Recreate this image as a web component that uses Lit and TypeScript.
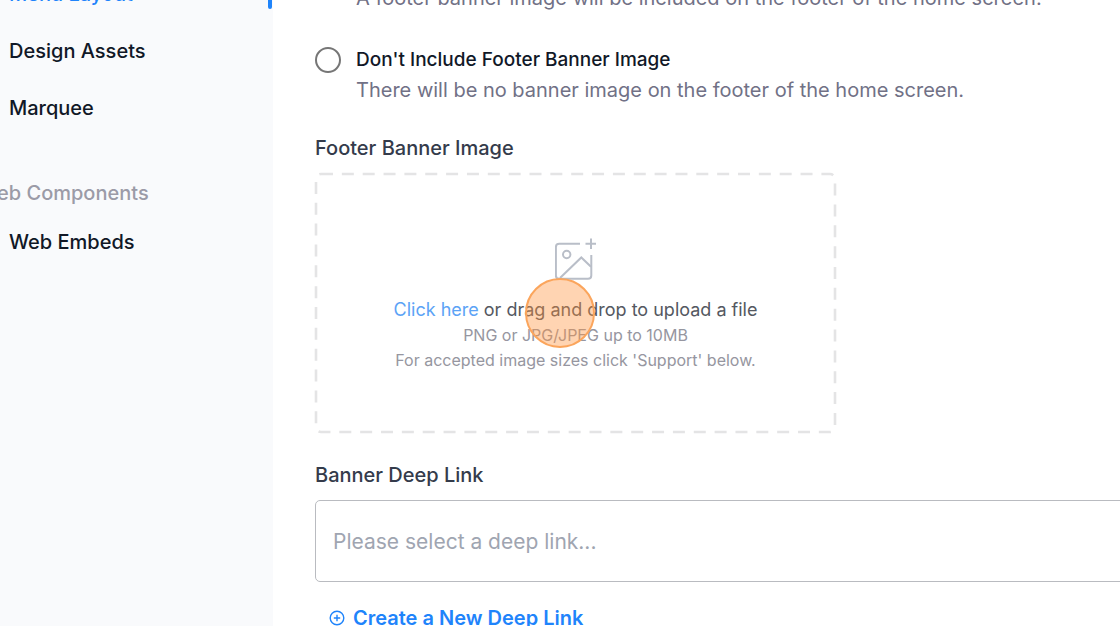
import { LitElement, html, css, svg } from "lit";
import { customElement, property } from "lit/decorators.js";
import { classMap } from "lit/directives/class-map.js";

interface NavItem {
  label: string;
  active?: boolean;
}

const LAYOUT_ITEMS: NavItem[] = [
  { label: "Menu Layout", active: true },
  { label: "Design Assets" },
  { label: "Marquee" },
];

const WEB_ITEMS: NavItem[] = [{ label: "Web Embeds" }];

@customElement("side-nav")
class SideNav extends LitElement {
  static styles = css`
    :host {
      display: block;
      background: #f9fafc;
      color: #111827;
      font-size: 20px;
      font-weight: 500;
      line-height: 32px;
    }
    .list {
      list-style: none;
      margin: 0;
      padding: 0;
      display: grid;
      gap: 25px;
    }
    .link {
      display: flex;
      justify-content: space-between;
      padding-left: 31px;
      margin-right: 1px;
      color: inherit;
      text-decoration: none;
    }
    .link.active {
      color: #1f84fb;
    }
    .marker {
      width: 4px;
      margin-bottom: 1px;
      border-radius: 2px;
      background: #1f84fb;
    }
    .heading {
      margin: 53px 0 17px;
      color: #9b9ba7;
      font-size: inherit;
      font-weight: 500;
    }
  `;

  private renderItem(item: NavItem) {
    return html`<li>
      <a href="#" class=${classMap({ link: true, active: !!item.active })}>
        <span>${item.label}</span>
        ${item.active ? html`<span class="marker"></span>` : null}
      </a>
    </li>`;
  }

  render() {
    return html`
      <nav>
        <ul class="list">
          ${LAYOUT_ITEMS.map((i) => this.renderItem(i))}
        </ul>
        <h2 class="heading">Web Components</h2>
        <ul class="list">
          ${WEB_ITEMS.map((i) => this.renderItem(i))}
        </ul>
      </nav>
    `;
  }
}

@customElement("banner-option")
class BannerOption extends LitElement {
  @property() label = "";
  @property() description = "";
  @property({ type: Boolean }) checked = false;

  static styles = css`
    :host {
      display: block;
    }
    .option {
      display: grid;
      grid-template-columns: 26px 1fr;
      column-gap: 15px;
      align-items: center;
    }
    .radio {
      appearance: none;
      box-sizing: border-box;
      width: 26px;
      height: 26px;
      margin: 0;
      border: 2px solid #767676;
      border-radius: 50%;
      background: #fff;
    }
    .radio:checked {
      border: 8px solid #1f84fb;
    }
    .label {
      color: #111827;
      font-size: 19px;
      font-weight: 500;
      line-height: 30px;
    }
    .description {
      grid-column: 2;
      margin: 0;
      color: #717186;
      font-size: 20px;
      line-height: 30px;
    }
  `;

  render() {
    return html`<div class="option">
      <input class="radio" id="choice" type="radio" aria-describedby="about" .checked=${this.checked} />
      <label class="label" for="choice">${this.label}</label>
      <p class="description" id="about">${this.description}</p>
    </div>`;
  }
}

@customElement("drop-zone")
class DropZone extends LitElement {
  static styles = css`
    :host {
      display: block;
      max-width: 521px;
    }
    .zone {
      position: relative;
      box-sizing: border-box;
      padding: 65px 24px 60px;
      display: flex;
      flex-direction: column;
      align-items: center;
      text-align: center;
      color: #9696a0;
      font-size: 16px;
      line-height: 25px;
    }
    .outline {
      position: absolute;
      inset: 0;
      width: 100%;
      height: 100%;
      overflow: visible;
    }
    .dashes {
      x: 1px;
      y: 1px;
      width: calc(100% - 2px);
      height: calc(100% - 2px);
      rx: 5px;
      fill: none;
      stroke: #e4e4e5;
      stroke-width: 2.6px;
      stroke-dasharray: 12 8.85;
    }
    .icon {
      width: 42px;
      height: 44px;
    }
    .text {
      margin: 0;
    }
    .lead {
      margin-top: 15px;
      color: #545861;
      font-size: 18px;
      line-height: 26px;
    }
    .pick {
      color: #5ca3f6;
      text-decoration: none;
    }
    .click-spot {
      position: absolute;
      left: 210px;
      top: 105px;
      box-sizing: border-box;
      width: 70px;
      height: 70px;
      border: 2px solid #fba55c;
      border-radius: 50%;
      background: rgba(255, 148, 62, 0.4);
      pointer-events: none;
    }
  `;

  render() {
    return html`<div class="zone">
      <svg class="outline" aria-hidden="true">${svg`<rect class="dashes"></rect>`}</svg>
      <svg class="icon" viewBox="0 0 42 44" fill="none" stroke="#b9bec8" stroke-width="2" aria-hidden="true">
        <path d="M25 5.800H4.200Q0.900 5.800 0.900 9.200V37.500Q0.900 40.800 4.200 40.800H33Q36.300 40.800 36.300 37.500V17" />
        <circle cx="11.700" cy="16.500" r="3.700" />
        <path d="M5 40L26.300 19.500L36 28.800" />
        <path d="M36 0.500V11M30.500 5.800H41" />
      </svg>
      <p class="text lead"><a class="pick" href="#">Click here</a> or drag and drop to upload a file</p>
      <p class="text">PNG or JPG/JPEG up to 10MB</p>
      <p class="text">For accepted image sizes click 'Support' below.</p>
      <span class="click-spot"></span>
    </div>`;
  }
}

@customElement("app-root")
class AppRoot extends LitElement {
  static styles = css`
    :host {
      display: grid;
      grid-template-columns: 295px minmax(0, 1fr);
      box-sizing: border-box;
      height: 100vh;
      margin-left: -22px;
      overflow: hidden;
      background: #fff;
      font-family: Inter, "Liberation Sans", sans-serif;
    }
    .nav,
    .content {
      margin-top: -22px;
    }
    .content {
      padding-left: 42px;
    }
    .options {
      display: grid;
      gap: 32px;
      margin: -25px 0 28px;
    }
    .field-label {
      display: block;
      margin: 27px 0 10px;
      color: #343b4b;
      font-size: 20px;
      font-weight: 500;
      line-height: 30px;
    }
    .select {
      appearance: none;
      display: block;
      box-sizing: border-box;
      width: calc(100% + 24px);
      height: 82px;
      padding: 0 17px;
      border: 1px solid #b9bbc0;
      border-radius: 5px;
      background: #fff;
      color: #9fa5b1;
      font: 400 21px Inter, "Liberation Sans", sans-serif;
    }
    .create {
      display: inline-flex;
      align-items: center;
      gap: 8px;
      margin: 21px 0 0 14px;
      color: #1f84fb;
      font-size: 20px;
      font-weight: 600;
      line-height: 30px;
      text-decoration: none;
    }
    .plus {
      width: 16px;
      height: 16px;
    }
  `;

  render() {
    return html`
      <side-nav class="nav"></side-nav>
      <main class="content">
        <div class="options" role="radiogroup" aria-label="Footer Banner">
          <banner-option
            checked
            label="Include Footer Banner Image"
            description="A footer banner image will be included on the footer of the home screen."
          ></banner-option>
          <banner-option
            label="Don't Include Footer Banner Image"
            description="There will be no banner image on the footer of the home screen."
          ></banner-option>
        </div>
        <span class="field-label">Footer Banner Image</span>
        <drop-zone></drop-zone>
        <label class="field-label" for="deep-link">Banner Deep Link</label>
        <select class="select" id="deep-link">
          <option>Please select a deep link...</option>
        </select>
        <a class="create" href="#">
          <svg class="plus" viewBox="0 0 16 16" fill="none" stroke="currentColor" stroke-width="1.4" aria-hidden="true">
            <circle cx="8" cy="8" r="6.800" />
            <path d="M8 4.800V11.200M4.800 8H11.200" />
          </svg>
          Create a New Deep Link
        </a>
      </main>
    `;
  }
}
